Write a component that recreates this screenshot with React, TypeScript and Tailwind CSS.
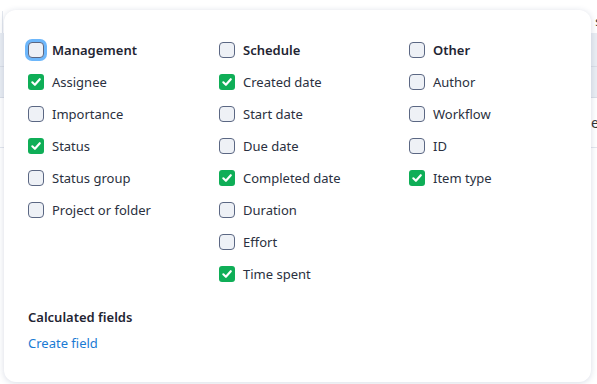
import React from "react";

type Item = { label: string; checked?: boolean; header?: boolean; focus?: boolean };

const cols: Item[][] = [
  [
    { label: "Management", header: true, focus: true },
    { label: "Assignee", checked: true },
    { label: "Importance" },
    { label: "Status", checked: true },
    { label: "Status group" },
    { label: "Project or folder" },
  ],
  [
    { label: "Schedule", header: true },
    { label: "Created date", checked: true },
    { label: "Start date" },
    { label: "Due date" },
    { label: "Completed date", checked: true },
    { label: "Duration" },
    { label: "Effort" },
    { label: "Time spent", checked: true },
  ],
  [
    { label: "Other", header: true },
    { label: "Author" },
    { label: "Workflow" },
    { label: "ID" },
    { label: "Item type", checked: true },
  ],
];

function Box({ checked, focus }: { checked?: boolean; focus?: boolean }) {
  if (checked) {
    return (
      <span className="flex h-[16px] w-[16px] shrink-0 items-center justify-center rounded-[3px] bg-[#0fae57]">
        <svg width="12" height="12" viewBox="0 0 12 12" fill="none">
          <path d="M2.3 6.3 L4.9 8.8 L9.8 3.2" stroke="white" strokeWidth="2.1" strokeLinecap="round" strokeLinejoin="round" />
        </svg>
      </span>
    );
  }
  return (
    <span
      className={
        "h-[16px] w-[16px] shrink-0 rounded-[4px] border-[1.5px] border-[#5b6783] bg-[#eef1f6] " +
        (focus ? "shadow-[0_0_0_3px_#6db7fb]" : "")
      }
    />
  );
}

export default function App() {
  return (
    <div
      className="relative h-[384px] w-[597px] overflow-hidden bg-white text-[13px]"
      style={{ fontFamily: "'Noto Sans', 'Open Sans', sans-serif" }}
    >
      {/* background table */}
      <div className="flex flex-col pt-[11px]">
        <div className="h-[22px] border-l border-[#e3e7ee] ml-[2px] flex items-center justify-end pr-[0px] text-[12px] text-[#333]">
          <span className="mr-[-4px]">s</span>
        </div>
        <div className="h-[34px] bg-[#e9edf3] border-b border-[#d9dee7]" />
        <div className="h-[31px] bg-[#e9edf3] border-b border-[#d9dee7]" />
        <div className="h-[50px] border-b border-[#e3e7ee] flex items-center justify-end text-[14px] text-[#333]">
          <span className="mr-[-2px]">e</span>
        </div>
        <div className="flex-1" />
      </div>

      {/* popup */}
      <div className="absolute left-[4px] top-[10px] h-[372px] w-[587px] rounded-[12px] bg-white px-[24px] pt-[24px] shadow-[0_1px_6px_rgba(40,60,110,0.18)]">
        <div className="grid grid-cols-[191px_190px_1fr]">
          {cols.map((col, i) => (
            <div key={i} className="flex flex-col">
              {col.map((it) => (
                <div key={it.label} className="flex h-[32px] items-center gap-[8px]">
                  <Box checked={it.checked} focus={it.focus} />
                  <span
                    className={
                      "leading-none " +
                      (it.header ? "font-semibold text-[#1f2533]" : "text-[#2a3040]")
                    }
                  >
                    {it.label}
                  </span>
                </div>
              ))}
            </div>
          ))}
        </div>
        <div className="mt-[17px] font-semibold text-[#1f2533] leading-[20px]">Calculated fields</div>
        <div className="mt-[6px] text-[#1a7bd4] leading-[20px]">Create field</div>
      </div>
    </div>
  );
}
